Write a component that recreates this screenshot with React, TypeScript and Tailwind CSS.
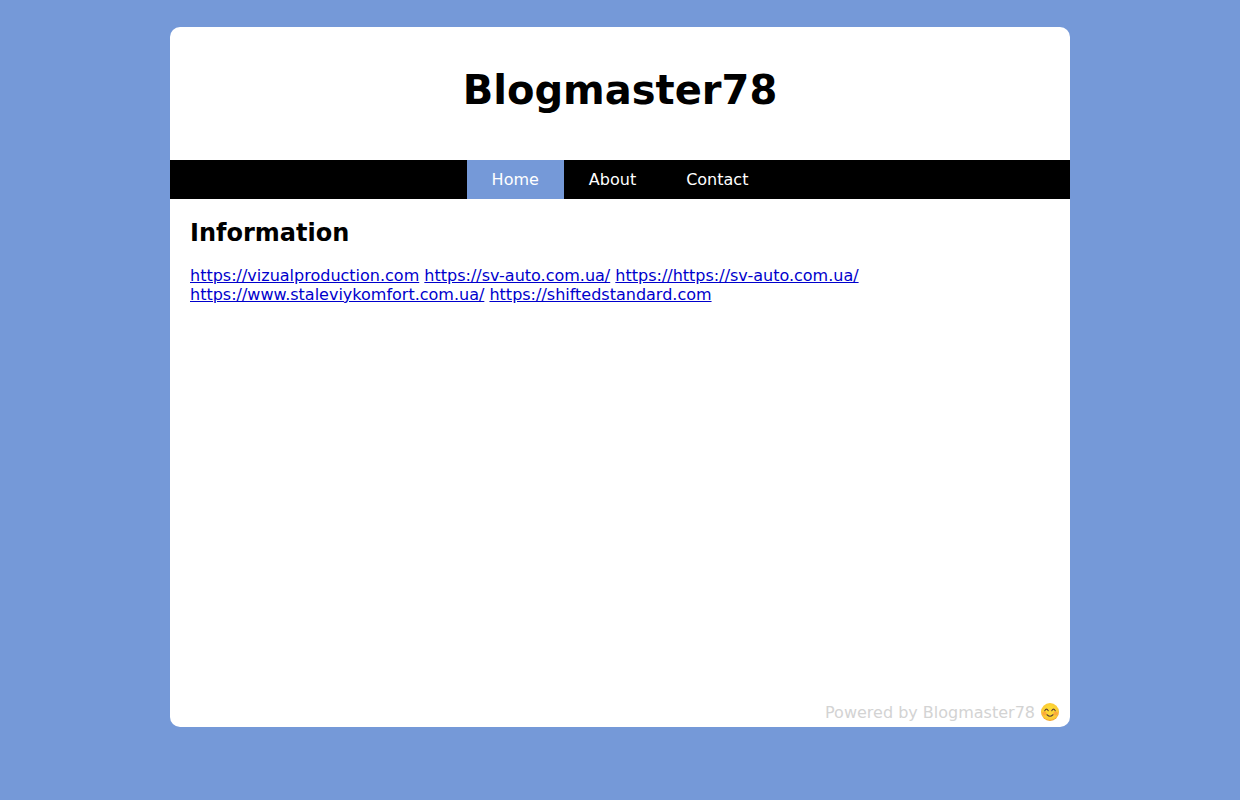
const NAV_ITEMS = [
  { label: 'Home', href: '#home', active: true },
  { label: 'About', href: '#about', active: false },
  { label: 'Contact', href: '#contact', active: false },
];

const LINKS = [
  'https://vizualproduction.com',
  'https://sv-auto.com.ua/',
  'https://https://sv-auto.com.ua/',
  'https://www.staleviykomfort.com.ua/',
  'https://shiftedstandard.com',
];

function Nav() {
  return (
    <nav className="flex justify-center bg-black text-white">
      {NAV_ITEMS.map((item) => (
        <a
          key={item.label}
          href={item.href}
          className={`px-[25px] py-[10px] ${item.active ? 'bg-[#7599d8]' : 'hover:bg-[#7599d8]'}`}
        >
          {item.label}
        </a>
      ))}
    </nav>
  );
}

function SmileIcon() {
  return (
    <svg viewBox="0 0 40 40" className="size-5" role="img" aria-label="smile">
      <defs>
        <radialGradient id="face" cx="50%" cy="45%" r="52%">
          <stop offset="50%" stopColor="#fdd835" />
          <stop offset="88%" stopColor="#fbc936" />
          <stop offset="100%" stopColor="#f2a52c" />
        </radialGradient>
      </defs>
      <circle cx="20" cy="20" r="18" fill="url(#face)" />
      {/* cheeks */}
      <ellipse cx="9" cy="23" rx="4.5" ry="4" fill="#ff7043" opacity="0.4" />
      <ellipse cx="31" cy="23" rx="4.5" ry="4" fill="#ff7043" opacity="0.4" />
      <g fill="none" stroke="#5d4037" strokeWidth="2.2" strokeLinecap="round">
        <path d="M9.5 17.5 Q13 11 16.5 17.5" />
        <path d="M23.5 17.5 Q27 11 30.5 17.5" />
        <path d="M14 25.5 Q20 31.5 26 25.5" />
      </g>
    </svg>
  );
}

export default function App() {
  return (
    <div className="min-h-screen bg-[#7599d8] py-[27px] font-['DejaVu_Sans',sans-serif] text-base leading-[19px] text-black">
      <div className="mx-auto flex min-h-[700px] max-w-[900px] flex-col overflow-hidden rounded-[10px] bg-white">
        <header className="px-5 pt-[39px] pb-[46px] text-center">
          <h1 className="text-[40px] leading-12 font-bold">Blogmaster78</h1>
        </header>

        <Nav />

        <main className="flex-1 p-5">
          <h2 className="mb-[19px] text-2xl leading-7 font-bold">Information</h2>
          <p className="max-w-[700px]">
            {LINKS.map((url) => (
              <span key={url}>
                <a href={url} className="text-[#0000cc] underline">{url}</a>{' '}
              </span>
            ))}
          </p>
        </main>

        <footer className="flex items-center justify-end gap-[5px] px-[10px] pb-[5px] text-[#d3d3d3]">
          <span>Powered by Blogmaster78</span>
          <SmileIcon />
        </footer>
      </div>
    </div>
  );
}
